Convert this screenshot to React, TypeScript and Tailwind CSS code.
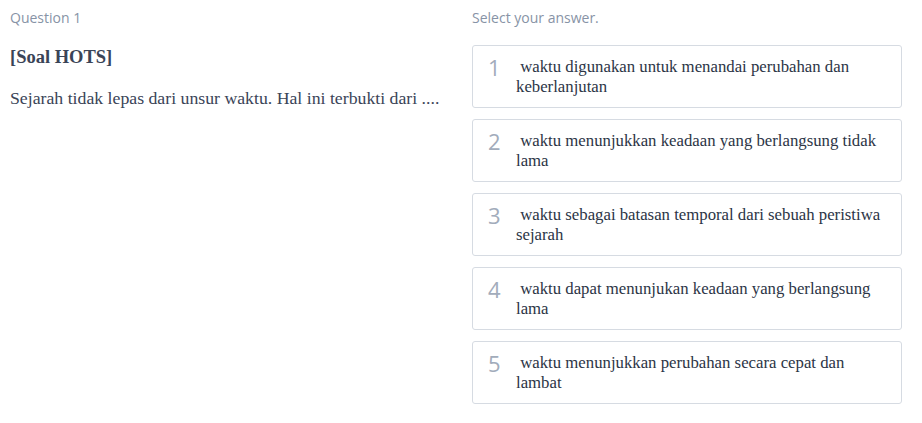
const options = [
  "waktu digunakan untuk menandai perubahan dan keberlanjutan",
  "waktu menunjukkan keadaan yang berlangsung tidak lama",
  "waktu sebagai batasan temporal dari sebuah peristiwa sejarah",
  "waktu dapat menunjukan keadaan yang berlangsung lama",
  "waktu menunjukkan perubahan secara cepat dan lambat",
];

const sans = "font-['Open_Sans',sans-serif]";
const serif = "font-['Liberation_Serif',serif]";

export default function App() {
  return (
    <div className="h-[423px] w-[922px] overflow-hidden bg-white">
      <div className="flex pl-[10px] pt-[9px]">
        <div className="w-[462px] shrink-0">
          <p className={`${sans} text-[14px] leading-[18px] text-[#8793a6]`}>Question 1</p>
          <h2 className={`${serif} mt-[20px] text-[18.5px] font-bold leading-[20px] text-[#3a4457]`}>
            [Soal HOTS]
          </h2>
          <p className={`${serif} mt-[21px] text-[17.75px] leading-[20px] text-[#3a4457]`}>
            Sejarah tidak lepas dari unsur waktu. Hal ini terbukti dari ....
          </p>
        </div>
        <div className="w-[430px] shrink-0">
          <p className={`${sans} text-[14px] leading-[18px] text-[#8793a6]`}>Select your answer.</p>
          <ul className="mt-[18px] flex flex-col gap-[11px]">
            {options.map((text, i) => (
              <li
                key={i}
                className="flex h-[63px] items-start gap-[14px] rounded-[3px] border border-[#d6dbe2] pl-[15px] pr-2 pt-[8px]"
              >
                <span className={`${sans} w-[14px] shrink-0 text-[22px] leading-[26px] text-[#a2acbb]`}>
                  {i + 1}
                </span>
                <span className={`${serif} pt-[3px] text-[16.75px] leading-[20px] text-[#2c3546]`}>
                  &nbsp;{text}
                </span>
              </li>
            ))}
          </ul>
        </div>
      </div>
    </div>
  );
}
